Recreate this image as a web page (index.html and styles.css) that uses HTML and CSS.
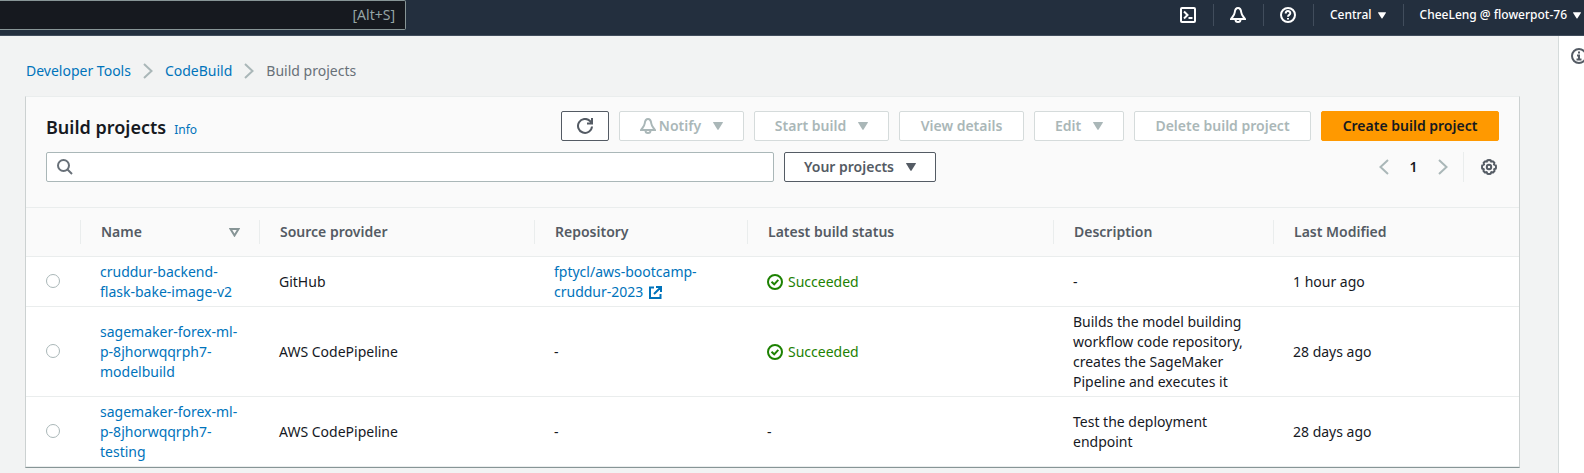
FILE: index.html
```html
<!DOCTYPE html>
<html lang="en">
<head>
<meta charset="utf-8">
<title>Build projects</title>
<link rel="stylesheet" href="styles.css">
</head>
<body>
<svg class="sprite" aria-hidden="true">
  <symbol id="bell" viewBox="0 0 16 16"><path d="M8 1C5.800 1 5 3 4.700 5.500C4.400 8 3 9 1 12H15C13 9 11.600 8 11.300 5.500C11 3 10.200 1 8 1ZM5.500 12.500C5.500 14.200 6.500 15 8 15S10.500 14.200 10.500 12.500"/></symbol>
  <symbol id="caret" viewBox="0 0 10 8"><path d="M0.500 0H9.500Q10.200 0 9.800 0.800L5.600 7.500Q5 8.300 4.400 7.500L0.200 0.800Q-0.200 0 0.500 0Z"/></symbol>
  <symbol id="right" viewBox="0 0 16 16"><path d="M4 1L11.500 8L4 15"/></symbol>
  <symbol id="left" viewBox="0 0 16 16"><path d="M12 1L4.500 8L12 15"/></symbol>
  <symbol id="check" viewBox="0 0 16 16"><circle cx="8" cy="8" r="7"/><path d="M4.500 7.800L7.200 10.300L11.300 5.800"/></symbol>
</svg>
<header class="topbar">
  <label class="global-search"><input type="search" aria-label="Search services"><span class="shortcut">[Alt+S]</span></label>
  <nav class="top-nav" aria-label="Account">
    <button class="nav-item" aria-label="CloudShell"><svg class="icon" viewBox="0 0 16 16"><rect x="1" y="1" width="14" height="14" rx="1"/><path d="M4 4.500L7.500 8L4 11.500M8.500 11H12.500"/></svg></button>
    <button class="nav-item" aria-label="Notifications"><svg class="icon"><use href="#bell"/></svg></button>
    <button class="nav-item" aria-label="Help"><svg class="icon" viewBox="0 0 16 16"><circle cx="8" cy="8" r="7"/><path d="M5.700 6.500C5.700 3.300 10.300 3.400 10.300 6.200C10.300 8 8 7.800 8 9.800M8 11V12.500"/></svg></button>
    <button class="nav-item nav-text">Central<svg class="caret small"><use href="#caret"/></svg></button>
    <button class="nav-item nav-text">CheeLeng @ flowerpot-76<svg class="caret small"><use href="#caret"/></svg></button>
  </nav>
</header>
<div class="shell">
  <main class="content">
    <nav class="breadcrumbs" aria-label="Breadcrumbs">
      <a href="#">Developer Tools</a><svg class="icon"><use href="#right"/></svg><a href="#">CodeBuild</a><svg class="icon"><use href="#right"/></svg><span>Build projects</span>
    </nav>
    <section class="panel">
      <div class="panel-head">
        <div class="title-row">
          <h1>Build projects</h1><a class="info" href="#">Info</a>
          <div class="actions">
            <button class="btn btn-icon" aria-label="Refresh"><svg class="icon" viewBox="0 0 16 16"><path d="M15 8.500A7 7 0 1 1 13 3L15 5M15 0V5.500H10"/></svg></button>
            <button class="btn w125" disabled><svg class="icon bell"><use href="#bell"/></svg>Notify<svg class="caret"><use href="#caret"/></svg></button>
            <button class="btn w135" disabled>Start build<svg class="caret"><use href="#caret"/></svg></button>
            <button class="btn w125" disabled>View details</button>
            <button class="btn w90" disabled>Edit<svg class="caret"><use href="#caret"/></svg></button>
            <button class="btn w177" disabled>Delete build project</button>
            <button class="btn primary">Create build project</button>
          </div>
        </div>
        <div class="filter-row">
          <label class="filter"><svg class="icon" viewBox="0 0 16 16"><circle cx="6.500" cy="6.500" r="5.500"/><path d="M10.500 10.500L15 15"/></svg><input type="text" aria-label="Find projects"></label>
          <button class="btn w152">Your projects<svg class="caret"><use href="#caret"/></svg></button>
          <div class="pager">
            <button class="plain" aria-label="Previous page"><svg class="icon"><use href="#left"/></svg></button>
            <span class="page">1</span>
            <button class="plain" aria-label="Next page"><svg class="icon"><use href="#right"/></svg></button>
            <button class="plain settings" aria-label="Preferences"><svg class="icon" viewBox="0 0 16 16"><path d="M6.500 1.200L8 1L9.500 1.200L10.200 2.700L11.800 2.300L13.300 3.700L13 5.500L14.800 6.500L15 8L14.800 9.500L13.200 10.300L13.500 12L12.200 13.500L10.400 13.200L9.500 14.800L8 15L6.500 14.800L5.600 13.200L3.800 13.500L2.500 12L2.800 10.300L1.200 9.500L1 8L1.200 6.500L3 5.500L2.700 3.700L4.200 2.300L5.800 2.700Z"/><circle cx="8" cy="8" r="2.200"/></svg></button>
          </div>
        </div>
      </div>
      <table class="projects">
        <colgroup><col class="c-pick"><col class="c-name"><col class="c-source"><col class="c-repo"><col class="c-status"><col class="c-desc"><col></colgroup>
        <thead>
          <tr><th aria-label="Select"></th>
          <th scope="col"><div class="th">Name<svg class="sort" viewBox="0 0 11 9"><path d="M1.500 1H9.500L5.500 7.500Z"/></svg></div></th>
          <th scope="col"><div class="th">Source provider</div></th>
          <th scope="col"><div class="th">Repository</div></th>
          <th scope="col"><div class="th">Latest build status</div></th>
          <th scope="col"><div class="th">Description</div></th>
          <th scope="col"><div class="th">Last Modified</div></th></tr>
        </thead>
        <tbody>
          <tr><td class="pick"><input type="radio" name="project" aria-label="cruddur-backend-flask-bake-image-v2"></td>
          <td><a href="#">cruddur-backend-<br>flask-bake-image-v2</a></td><td>GitHub</td>
          <td><a href="#">fptycl/aws-bootcamp-<br>cruddur-2023 <svg class="external" viewBox="0 0 13 13"><path d="M5 1.500H1V12H11.500V8M7 1H12V6M12 1L5 8"/></svg></a></td>
          <td><span class="status"><svg class="icon"><use href="#check"/></svg>Succeeded</span></td><td>-</td><td>1 hour ago</td></tr>
          <tr><td class="pick"><input type="radio" name="project" aria-label="sagemaker-forex-ml-p-8jhorwqqrph7-modelbuild"></td>
          <td><a href="#">sagemaker-forex-ml-<br>p-8jhorwqqrph7-<br>modelbuild</a></td><td>AWS CodePipeline</td><td>-</td>
          <td><span class="status"><svg class="icon"><use href="#check"/></svg>Succeeded</span></td>
          <td>Builds the model building<br>workflow code repository,<br>creates the SageMaker<br>Pipeline and executes it</td><td>28 days ago</td></tr>
          <tr><td class="pick"><input type="radio" name="project" aria-label="sagemaker-forex-ml-p-8jhorwqqrph7-testing"></td>
          <td><a href="#">sagemaker-forex-ml-<br>p-8jhorwqqrph7-<br>testing</a></td><td>AWS CodePipeline</td><td>-</td><td>-</td>
          <td>Test the deployment<br>endpoint</td><td>28 days ago</td></tr>
        </tbody>
      </table>
    </section>
  </main>
  <aside class="help-strip">
    <button class="plain" aria-label="Open info panel"><svg class="icon" viewBox="0 0 16 16"><circle cx="8" cy="8" r="7"/><path d="M8 3.500V5.500M6 7.500H8V11.500M5.500 11.500H10.500"/></svg></button>
  </aside>
</div>
</body>
</html>
```
FILE: styles.css
```css
* { box-sizing: border-box; }
body {
  margin: 0;
  min-height: 100vh;
  display: flex;
  flex-direction: column;
  overflow: hidden;
  background: #f2f3f3;
  color: #16191f;
  font: 14px/20px "Noto Sans", "Open Sans", sans-serif;
}
a { color: #0073bb; text-decoration: none; }
button, input { font: inherit; color: inherit; }
button { display: inline-flex; align-items: center; justify-content: center; white-space: nowrap; }
.sprite { position: absolute; width: 0; height: 0; }
.icon { width: 16px; height: 16px; flex: none; fill: none; stroke: currentColor; stroke-width: 2; }
.caret { width: 10px; height: 8px; flex: none; margin-left: 12px; fill: currentColor; }
.caret.small { width: 8px; height: 7px; margin-left: 6px; }

.topbar {
  display: flex;
  justify-content: space-between;
  height: 36px;
  flex: none;
  background: #232f3e;
  border-bottom: 1px solid #414d5c;
  color: #fff;
}
.global-search {
  display: flex;
  align-items: center;
  width: 406px;
  height: 30px;
  padding-right: 10px;
  background: #16191f;
  border: 1px solid #879596;
  border-left: 0;
  border-radius: 0 2px 2px 0;
}
.global-search input { flex: 1; min-width: 0; border: 0; background: none; outline: none; }
.shortcut { color: #95a5a6; }
.top-nav { display: flex; height: 22px; margin-top: 4px; }
.nav-item { width: 50px; padding: 0; border: 0; border-left: 1px solid #414d5c; background: none; }
.nav-item:first-child { border-left: 0; }
.nav-text { width: auto; padding: 0 17px 0 16px; font-size: 12px; font-weight: 500; }
.nav-text:last-child { padding-right: 3px; }

.shell { display: flex; flex: 1; }
.content { flex: 1; min-width: 0; padding: 25px 38px 0 25px; }
.breadcrumbs { display: flex; align-items: center; gap: 9px; margin-left: 1px; height: 20px; color: #687078; }
.breadcrumbs .icon { color: #aab7b8; }

.panel {
  margin-top: 15px;
  background: #fff;
  border: 1px solid #ccd1d1;
  border-top-color: #eaeded;
  border-bottom-color: #879596;
}
.panel-head { padding: 14px 20px 25px; background: #fafafa; }
.title-row { display: flex; align-items: center; }
h1 { margin: 0; font-size: 18px; line-height: 22px; font-weight: 600; }
.title-row { align-items: baseline; }
.info { margin-left: 8px; font-size: 12px; }
.actions { display: flex; gap: 10px; margin-left: auto; }
.btn {
  height: 30px;
  padding: 0;
  background: #fff;
  border: 1px solid #545b64;
  border-radius: 2px;
  color: #545b64;
  font-weight: 600;
}
.btn:disabled { color: #aab7b8; border-color: #d5dbdb; }
.btn-icon { width: 48px; }
.bell { margin-right: 3px; }
.w90 { min-width: 90px; }
.w125 { min-width: 125px; }
.w135 { min-width: 135px; }
.w152 { min-width: 152px; }
.w177 { min-width: 177px; }
.primary { min-width: 178px; background: #ff9900; border-color: #ff9900; color: #16191f; }
.filter-row { display: flex; gap: 10px; margin-top: 11px; }
.filter {
  display: flex;
  align-items: center;
  flex: 1;
  max-width: 728px;
  height: 30px;
  padding: 0 10px;
  background: #fff;
  border: 1px solid #aab7b8;
  border-radius: 2px;
  color: #687078;
}
.filter input { flex: 1; min-width: 0; border: 0; outline: none; background: none; }
.pager { display: flex; align-items: center; margin-left: auto; color: #aab7b8; }
.plain { padding: 0; border: 0; background: none; }
.page { width: 43px; text-align: center; color: #16191f; font-weight: 600; }
.settings { height: 30px; margin-left: 12px; padding: 0 2px 0 17px; border-left: 1px solid #eaeded; color: #545b64; }

.projects { width: 100%; table-layout: fixed; border-collapse: collapse; }
.c-pick { width: 54px; }
.c-name { width: 179px; }
.c-source { width: 275px; }
.c-repo { width: 213px; }
.c-status { width: 306px; }
.c-desc { width: 220px; }
.projects th { padding: 12px 0; text-align: left; background: #fafafa; border-top: 1px solid #eaeded; color: #545b64; font-weight: 600; }
.th { display: flex; align-items: center; justify-content: space-between; height: 24px; padding: 0 19px 0 20px; border-left: 1px solid #eaeded; }
.sort { width: 11px; height: 9px; fill: none; stroke: #879596; stroke-width: 2; }
.projects tbody { border-bottom: 1px solid #eaeded; }
.projects td { padding: 5px 10px 4px 20px; border-top: 1px solid #eaeded; white-space: nowrap; }
.projects .pick { padding: 0 0 2px 20px; }
.pick input {
  display: block;
  appearance: none;
  width: 14px;
  height: 14px;
  margin: 0;
  background: #fff;
  border: 1px solid #aab7b8;
  border-radius: 50%;
}
.external { width: 13px; height: 13px; margin-left: 2px; vertical-align: -2px; fill: none; stroke: currentColor; stroke-width: 2; }
.status { display: flex; align-items: center; gap: 5px; color: #1d8102; }

.help-strip { width: 26px; padding: 12px 0 0 12px; background: #fff; border-left: 1px solid #d5dbdb; color: #545b64; }
```
